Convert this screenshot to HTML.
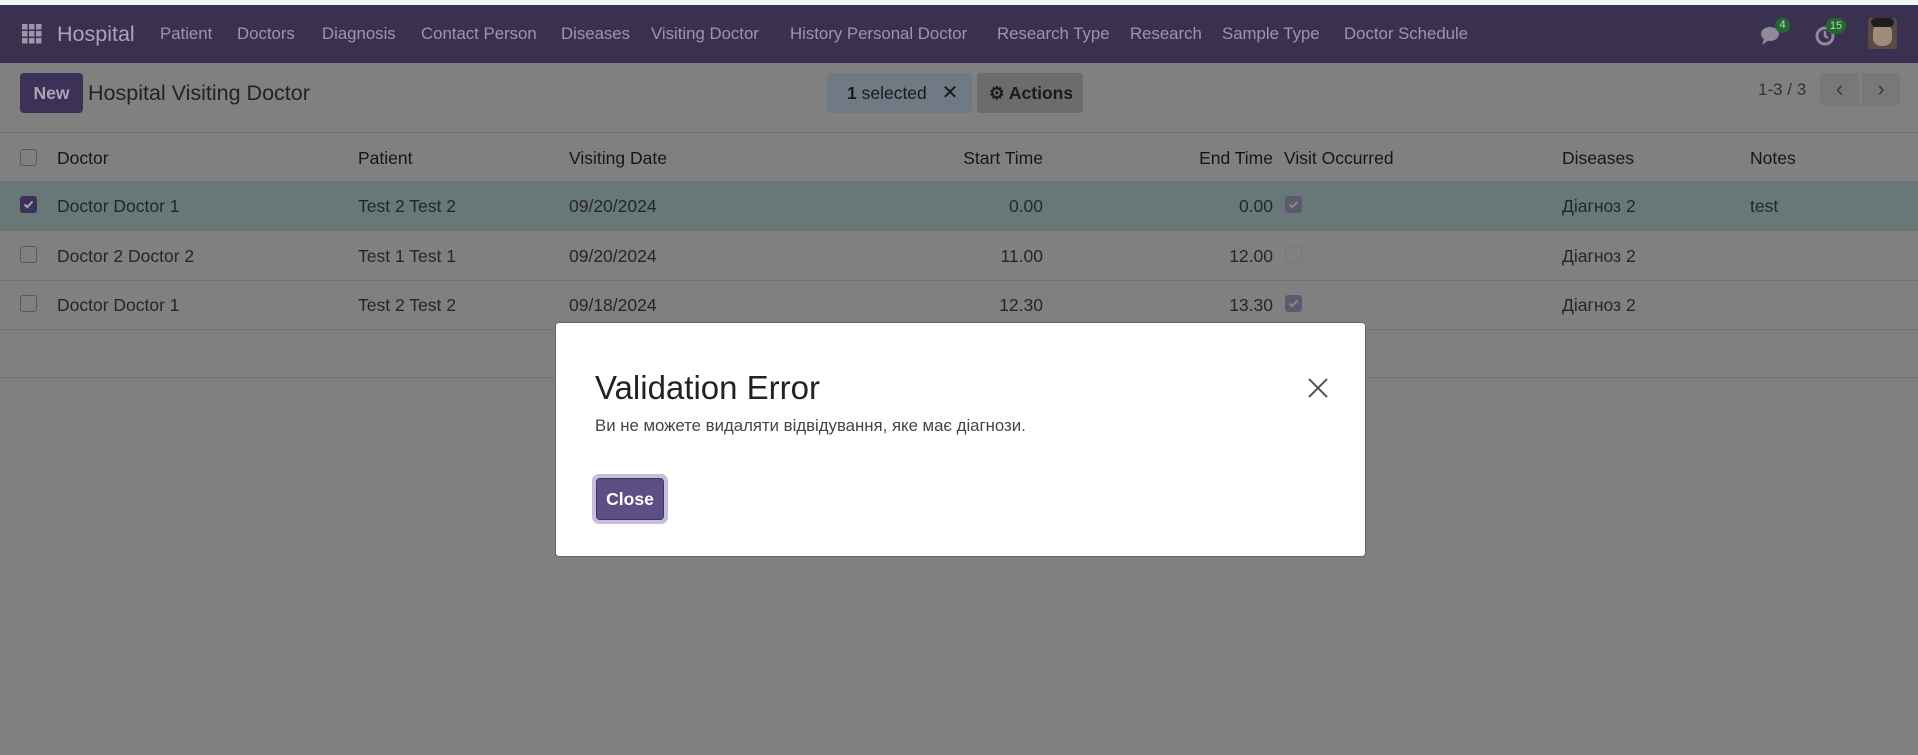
<!DOCTYPE html>
<html><head><meta charset="utf-8"><style>
*{box-sizing:border-box;margin:0;padding:0}
body{width:1918px;height:755px;overflow:hidden;background:#808080;font-family:"Liberation Sans","Noto Sans CJK SC",sans-serif;position:relative;color:#1a1a1a}
.a{position:absolute;white-space:nowrap}
.nav{position:absolute;left:0;top:5px;width:1918px;height:58px;background:#3a3151}
.top{position:absolute;left:0;top:0;width:1918px;height:5px;background:#f0f8f5}
.nav .m{position:absolute;top:0;line-height:58px;font-size:16.8px;color:#9b97a6}
.cb{position:absolute;width:17px;height:17px;border:1px solid #5a5a5a;border-radius:3px}
.hd{font-size:17.5px;color:#161616;top:148px}
.r{font-size:17.5px;color:#262626}
.line{position:absolute;left:0;width:1918px;height:1px;background:#737373}
</style></head><body>
<div class="top"></div>
<div class="nav">
  <svg class="a" style="left:22px;top:19px" width="20" height="20" viewBox="0 0 20 20" fill="#9b97a6"><rect x="0" y="0" width="5.5" height="5.5"/><rect x="7" y="0" width="5.5" height="5.5"/><rect x="14" y="0" width="5.5" height="5.5"/><rect x="0" y="7" width="5.5" height="5.5"/><rect x="7" y="7" width="5.5" height="5.5"/><rect x="14" y="7" width="5.5" height="5.5"/><rect x="0" y="14" width="5.5" height="5.5"/><rect x="7" y="14" width="5.5" height="5.5"/><rect x="14" y="14" width="5.5" height="5.5"/></svg>
  <div class="m" style="left:57px;font-size:21.5px;color:#a9a5b3">Hospital</div>
  <div class="m" style="left:160px">Patient</div>
  <div class="m" style="left:237px">Doctors</div>
  <div class="m" style="left:322px">Diagnosis</div>
  <div class="m" style="left:421px">Contact Person</div>
  <div class="m" style="left:561px">Diseases</div>
  <div class="m" style="left:651px">Visiting Doctor</div>
  <div class="m" style="left:790px">History Personal Doctor</div>
  <div class="m" style="left:997px">Research Type</div>
  <div class="m" style="left:1130px">Research</div>
  <div class="m" style="left:1222px">Sample Type</div>
  <div class="m" style="left:1344px">Doctor Schedule</div>
  <svg class="a" style="left:1760px;top:20px" width="24" height="22" viewBox="0 0 24 22" fill="#8e8a99"><ellipse cx="10" cy="9" rx="9" ry="7"/><path d="M4 14 L2 20 L9 15Z"/></svg>
  <div class="a" style="left:1775px;top:13px;width:15px;height:15px;border-radius:8px;background:#1f6b2e;color:#ccc;font-size:11px;text-align:center;line-height:15px">4</div>
  <svg class="a" style="left:1814px;top:20px" width="22" height="22" viewBox="0 0 22 22"><circle cx="11" cy="11" r="8" fill="none" stroke="#8e8a99" stroke-width="3"/><path d="M11 6V11L14 13" stroke="#8e8a99" stroke-width="2.5" fill="none"/></svg>
  <div class="a" style="left:1826px;top:13px;width:20px;height:16px;border-radius:8px;background:#1f6b2e;color:#ccc;font-size:11px;text-align:center;line-height:16px">15</div>
  <div class="a" style="left:1868px;top:13px;width:29px;height:31px;border-radius:3px;background:#5a4c45;overflow:hidden">
    <div class="a" style="left:5px;top:6px;width:19px;height:22px;border-radius:8px;background:#a08a78"></div>
    <div class="a" style="left:3px;top:0;width:23px;height:9px;border-radius:5px;background:#1e1e1e"></div>
  </div>
</div>
<!-- control panel -->
<div class="a" style="left:20px;top:73px;width:63px;height:40px;background:#3c3157;border-radius:4px;color:#a9a5b3;font-size:17.5px;font-weight:bold;text-align:center;line-height:40px">New</div>
<div class="a" style="left:88px;top:81px;font-size:21.5px;color:#222">Hospital Visiting Doctor</div>
<div class="a" style="left:827px;top:73px;width:145px;height:40px;background:#6f7a84;border-radius:4px;font-size:17.5px;line-height:40px;color:#1a1a1a;padding-left:20px"><b>1</b> selected <span style="margin-left:10px;font-size:20px">✕</span></div>
<div class="a" style="left:977px;top:73px;width:106px;height:40px;background:#6c6c6c;border-radius:4px;font-size:17.5px;line-height:40px;color:#1a1a1a;padding-left:12px;font-weight:bold">⚙ Actions</div>
<div class="a" style="left:1758px;top:80px;font-size:17px;color:#333">1-3 / 3</div>
<div class="a" style="left:1820px;top:73px;width:39px;height:33px;background:#787878;border-radius:4px 0 0 4px;color:#3a3a3a;font-size:22px;text-align:center;line-height:31px">‹</div>
<div class="a" style="left:1862px;top:73px;width:38px;height:33px;background:#787878;border-radius:0 4px 4px 0;color:#3a3a3a;font-size:22px;text-align:center;line-height:31px">›</div>
<div class="line" style="top:132px"></div>
<!-- header -->
<div class="cb" style="left:20px;top:149px"></div>
<div class="a hd" style="left:57px">Doctor</div>
<div class="a hd" style="left:358px">Patient</div>
<div class="a hd" style="left:569px">Visiting Date</div>
<div class="a hd" style="right:875px">Start Time</div>
<div class="a hd" style="right:645px">End Time</div>
<div class="a hd" style="left:1284px">Visit Occurred</div>
<div class="a hd" style="left:1562px">Diseases</div>
<div class="a hd" style="left:1750px">Notes</div>
<!-- rows -->
<div class="a" style="left:0;top:181px;width:1918px;height:49px;background:#687878"></div>
<div class="line" style="top:181px"></div>
<div class="line" style="top:230px"></div>
<div class="line" style="top:280px"></div>
<div class="line" style="top:329px"></div>
<div class="line" style="top:377px"></div>
<div class="cb" style="left:20px;top:196px;background:#3d3158;border-color:#3d3158"><svg width="15" height="15" viewBox="0 0 15 15" style="position:absolute;left:0;top:0"><path d="M3.5 7.5L6.3 10.2 11.5 4.5" stroke="#aaa" stroke-width="2" fill="none"/></svg></div>
<div class="cb" style="left:20px;top:246px"></div>
<div class="cb" style="left:20px;top:295px"></div>
<div class="a r" style="left:57px;top:196px">Doctor Doctor 1</div>
<div class="a r" style="left:358px;top:196px">Test 2 Test 2</div>
<div class="a r" style="left:569px;top:196px">09/20/2024</div>
<div class="a r" style="right:875px;top:196px">0.00</div>
<div class="a r" style="right:645px;top:196px">0.00</div>
<div class="cb" style="left:1285px;top:196px;background:#5c5a6c;border-color:#5c5a6c"><svg width="15" height="15" viewBox="0 0 15 15" style="position:absolute;left:0;top:0"><path d="M3.5 7.5L6.3 10.2 11.5 4.5" stroke="#888" stroke-width="2" fill="none"/></svg></div>
<div class="a r" style="left:1562px;top:196px">Діагноз 2</div>
<div class="a r" style="left:1750px;top:196px">test</div>
<div class="a r" style="left:57px;top:246px">Doctor 2 Doctor 2</div>
<div class="a r" style="left:358px;top:246px">Test 1 Test 1</div>
<div class="a r" style="left:569px;top:246px">09/20/2024</div>
<div class="a r" style="right:875px;top:246px">11.00</div>
<div class="a r" style="right:645px;top:246px">12.00</div>
<div class="cb" style="left:1285px;top:246px;border-color:#777"></div>
<div class="a r" style="left:1562px;top:246px">Діагноз 2</div>
<div class="a r" style="left:57px;top:295px">Doctor Doctor 1</div>
<div class="a r" style="left:358px;top:295px">Test 2 Test 2</div>
<div class="a r" style="left:569px;top:295px">09/18/2024</div>
<div class="a r" style="right:875px;top:295px">12.30</div>
<div class="a r" style="right:645px;top:295px">13.30</div>
<div class="cb" style="left:1285px;top:295px;background:#5c5a6c;border-color:#5c5a6c"><svg width="15" height="15" viewBox="0 0 15 15" style="position:absolute;left:0;top:0"><path d="M3.5 7.5L6.3 10.2 11.5 4.5" stroke="#888" stroke-width="2" fill="none"/></svg></div>
<div class="a r" style="left:1562px;top:295px">Діагноз 2</div>
<!-- modal -->
<div class="a" style="left:555px;top:322px;width:811px;height:235px;background:#fff;border-radius:4px;border:1px solid #666">
  <div class="a" style="left:39px;top:46px;font-size:33px;color:#222">Validation Error</div>
  <svg class="a" style="left:752px;top:55px" width="20" height="20" viewBox="0 0 20 20"><path d="M1 1L19 19M19 1L1 19" stroke="#555" stroke-width="2"/></svg>
  <div class="a" style="left:39px;top:93px;font-size:16.8px;color:#444">Ви не можете видаляти відвідування, яке має діагнози.</div>
  <div class="a" style="left:36px;top:151px;width:76px;height:50px;border-radius:7px;background:#c7bedb"></div>
  <div class="a" style="left:40px;top:155px;width:68px;height:42px;border-radius:4px;background:#5d4f85;border:1px solid #3f3560;color:#fff;font-size:17.5px;font-weight:bold;text-align:center;line-height:40px">Close</div>
</div>
</body></html>
